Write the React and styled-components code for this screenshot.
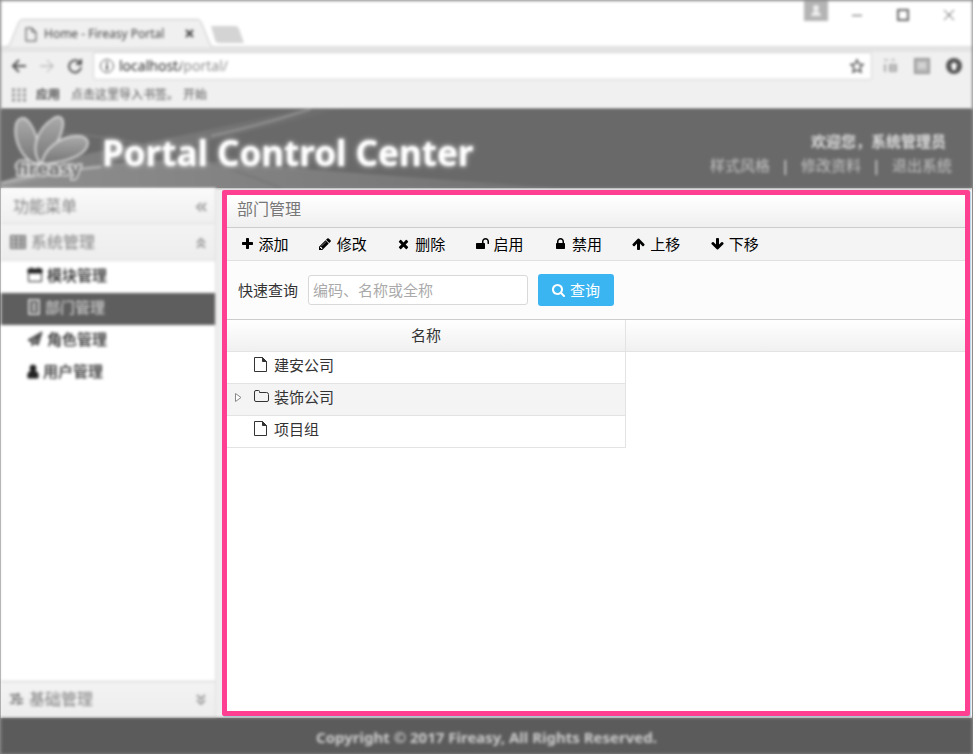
import React from "react";
import styled, { createGlobalStyle, css } from "styled-components";

const cjk = `"Noto Sans", "Noto Sans CJK SC", sans-serif`;

const GlobalStyle = createGlobalStyle`
  *, *::before, *::after { box-sizing: border-box; }
  body { margin: 0; background: #8c8c8c; color: #333; font: 15px/20px ${cjk}; }
  button, input { font: inherit; color: inherit; }
  a { color: inherit; text-decoration: none; }
  svg { display: block; flex: none; }
`;

/* ---------- window ---------- */

const soft = css`
  filter: blur(1.7px);
`;

const Shell = styled.div`
  min-height: 100vh;
  padding: 1px 1px 0;
  display: flex;
  flex-direction: column;
  background: #8c8c8c;
  overflow: hidden;
`;

const PlainButton = styled.button`
  border: 0;
  padding: 0;
  background: none;
  cursor: pointer;
`;

/* ---------- browser frame ---------- */

const Browser = styled.div`
  ${soft}
  background: #f0f0f0;
  color: #555;
  font-size: 12px;
  line-height: 16px;
`;

const TitleBar = styled.div`
  height: 46px;
  display: flex;
  align-items: flex-end;
  justify-content: space-between;
  padding-left: 4px;
  background: #fff;
  box-shadow: inset 0 -1px #ddd;
`;

const TabStrip = styled.div`
  display: flex;
  align-items: flex-end;
`;

const Tab = styled.div`
  position: relative;
  z-index: 0;
  width: 208px;
  height: 28px;
  display: flex;
  align-items: center;
  padding: 2px 18px 0 20px;
  gap: 7px;
  color: #444;

  > span { flex: 1; white-space: nowrap; }
`;

const TabShape = styled.svg`
  position: absolute;
  inset: 0;
  z-index: -1;
`;

const NewTab = styled(PlainButton)`
  margin: 0 0 4px -3px;
`;

const WindowButtons = styled.div`
  align-self: flex-start;
  display: flex;
  align-items: flex-start;
  gap: 22px;
  padding-right: 11px;
`;

const Account = styled(PlainButton)`
  width: 24px;
  height: 20px;
  margin-right: -5px;
  display: grid;
  place-items: center;
  background: #b4b4b4;
`;

const WindowButton = styled(PlainButton)`
  width: 24px;
  height: 28px;
  display: grid;
  place-items: center;
`;

const AddressRow = styled.div`
  display: flex;
  align-items: center;
  gap: 10px;
  padding: 5px 10px 0;
  background: linear-gradient(#e4e4e4 5px, #f0f0f0 5px);
`;

const NavButtons = styled.div`
  display: flex;
  gap: 12px;
`;

const AddressBox = styled.label`
  flex: 1;
  height: 28px;
  display: flex;
  align-items: center;
  gap: 4px;
  padding: 0 6px 0 5px;
  background: #fff;
  border: 1px solid #d2d2d2;
  border-radius: 2px;
`;

const Address = styled.input`
  flex: 1;
  min-width: 0;
  border: 0;
  padding: 0;
  outline: 0;
  font-size: 14px;
  color: transparent;
  background: linear-gradient(to right, #222 62px, #888 62px);
  background-clip: text;
  -webkit-background-clip: text;
`;

const Extensions = styled.div`
  display: flex;
  gap: 16px;
`;

const Bookmarks = styled.div`
  height: 29px;
  display: flex;
  align-items: center;
  gap: 11px;
  padding: 1px 0 0 11px;

  a:first-of-type { color: #222; margin-left: -1px; font-weight: 500; }
  a:last-of-type { margin-left: -7px; }
`;

/* ---------- portal header ---------- */

const Header = styled.header`
  ${soft}
  position: relative;
  height: 79px;
  display: flex;
  align-items: center;
  background: #696969;
  overflow: hidden;
`;

const Swoosh = styled.svg`
  position: absolute;
  inset: 0;
`;

const Brand = styled.div`
  position: relative;
  flex: 1;
  display: flex;
  align-items: center;
  gap: 12px;
  padding-left: 11px;
`;

const BrandTitle = styled.h1`
  margin: 8px 0 0;
  font: bold 35px/44px "Noto Sans", sans-serif;
  color: #fff;
  text-shadow: 0 0 5px #ddd;
  white-space: nowrap;
`;

const UserArea = styled.div`
  position: relative;
  padding: 9px 20px 0 0;
  color: #ccc;
  line-height: 24px;
`;

const Welcome = styled.div`
  padding-right: 6px;
  text-align: right;
  font-weight: bold;
  color: #ddd;
`;

const UserLinks = styled.nav`
  display: flex;
  color: #c4c4c4;

  a + a::before { content: "|"; display: inline-block; width: 31px; text-align: center; color: #eee; }
`;

/* ---------- body ---------- */

const Main = styled.main`
  flex: 1;
  display: flex;
  align-items: stretch;
  background: #efefef;
`;

const Sidebar = styled.aside`
  ${soft}
  width: 215px;
  display: flex;
  flex-direction: column;
  background: #fff;
  border-right: 1px solid #ddd;
`;

const SideBar = styled.div`
  height: ${(p) => (p.$title ? 36 : 37)}px;
  display: flex;
  align-items: center;
  gap: 5px;
  padding: 0 8px ${(p) => (p.$top ? 2 : 0)}px ${(p) => (p.$title ? 12 : 9)}px;
  font-size: 16px;
  color: #808080;
  background: linear-gradient(${(p) => (p.$title ? "#fafafa, #efefef" : "#f3f3f3, #ededed")});
  border-bottom: 1px solid #ddd;
  border-top: ${(p) => (p.$top ? "1px solid #ccc" : "0")};

  > span { flex: 1; }
`;

const Menu = styled.nav`
  flex: 1;
`;

const MenuItem = styled.a`
  height: 32px;
  display: flex;
  align-items: center;
  gap: 4px;
  padding: 0 0 4px 26px;
  font-weight: 500;
  color: ${(p) => (p.$active ? "#ccc" : "#222")};
  background: ${(p) => (p.$active ? "#5e5e5e" : "transparent")};
`;

const Panel = styled.section`
  flex: 1;
  min-width: 0;
  margin: 2px 2px 2px 6px;
  border: 5px solid #ff4092;
  border-radius: 2px;
  box-shadow: 1px 1px #b9d9e8;
  background: #fff;
`;

const PanelTitle = styled.h2`
  margin: 0;
  height: 33px;
  padding: 4px 10px;
  font-size: 16px;
  font-weight: normal;
  color: #777;
  background: linear-gradient(#fff, #efefef);
  border-bottom: 1px solid #ccc;
`;

const Toolbar = styled.div`
  height: 33px;
  display: flex;
  align-items: center;
  gap: 5px;
  background: #f4f4f4;
  border-bottom: 1px solid #e1e1e1;
`;

const Tool = styled(PlainButton)`
  padding: 0 12px;
  color: #000;
  font-family: "Noto Sans CJK SC", sans-serif;
  white-space: nowrap;
`;

const IconSlot = styled.span`
  display: inline-flex;
  width: 16px;
  justify-content: center;
  vertical-align: -1px;
`;

const SearchForm = styled.form`
  height: 59px;
  display: flex;
  align-items: center;
  gap: 10px;
  padding: 0 11px;
  background: #fcfcfc;
  border-bottom: 1px solid #ccc;
`;

const SearchInput = styled.input`
  width: 220px;
  height: 30px;
  padding: 0 4px;
  border: 1px solid #d9d9d9;
  border-radius: 3px;
  background: #fff;
  &::placeholder { color: #aaa; opacity: 1; }
`;

const SearchButton = styled.button`
  height: 32px;
  display: flex;
  align-items: center;
  gap: 5px;
  padding: 0 14px;
  border: 0;
  border-radius: 3px;
  color: #fff;
  background: #3bb4f2;
  cursor: pointer;
`;

const Tree = styled.table`
  width: 100%;
  table-layout: fixed;
  border-collapse: separate;
  border-spacing: 0;
`;

const NameCol = styled.col`
  width: 399px;
`;

const Th = styled.th`
  height: 32px;
  padding: 0 0 2px;
  font-weight: normal;
  background: linear-gradient(#fff, #f0f0f0);
  border-bottom: 1px solid #e3e3e3;

  &:first-child { border-right: 1px solid #e3e3e3; }
`;

const Td = styled.td`
  height: 32px;
  padding: 0;
  background: ${(p) => (p.$alt ? "#f4f4f4" : "transparent")};
  border: solid #e3e3e3;
  border-width: 0 1px 1px 0;
`;

const Node = styled.div`
  display: grid;
  grid-template-columns: 19px 16px 1fr;
  align-items: center;
  column-gap: 4px;
  padding: 0 0 6px 4px;

  > :nth-child(2) { justify-self: start; }
`;

const Expander = styled(PlainButton)`
  height: 20px;
  display: grid;
  align-items: center;
  padding: 2px 0 0 4px;
`;

const Footer = styled.footer`
  ${soft}
  height: 36px;
  padding-top: 1px;
  display: grid;
  place-items: center;
  font: bold 15px/20px "Noto Sans", sans-serif;
  color: #ccc;
  background: #5b5b5b;
`;

/* ---------- icons ---------- */

const glyphs = {
  plus: [192, 1408, "M1600 736v192q0 40-28 68t-68 28h-416v416q0 40-28 68t-68 28h-192q-40 0-68-28t-28-68v-416h-416q-40 0-68-28t-28-68v-192q0-40 28-68t68-28h416v-416q0-40 28-68t68-28h192q40 0 68 28t28 68v416h416q40 0 68 28t28 68z"],
  pencil: [128, 1536, "M491 1536l91-91-235-235-91 91v107h128v128h107zm523-928q0-22-22-22-10 0-17 7l-542 542q-7 7-7 17 0 22 22 22 10 0 17-7l542-542q7-7 7-17zm-54-192l416 416-832 832h-416v-416zm683 96q0 53-37 90l-166 166-416-416 166-165q36-38 90-38 53 0 91 38l235 234q37 39 37 91z"],
  times: [192, 1408, "M1490 1322q0 40-28 68l-136 136q-28 28-68 28t-68-28l-294-294-294 294q-28 28-68 28t-68-28l-136-136q-28-28-28-68t28-68l294-294-294-294q-28-28-28-68t28-68l136-136q28-28 68-28t68 28l294 294 294-294q28-28 68-28t68 28l136 136q28 28 28 68t-28 68l-294 294 294 294q28 28 28 68z"],
  unlock: [64, 1664, "M1728 576v256q0 26-19 45t-45 19h-64q-26 0-45-19t-19-45v-256q0-106-75-181t-181-75-181 75-75 181v192h96q40 0 68 28t28 68v576q0 40-28 68t-68 28h-960q-40 0-68-28t-28-68v-576q0-40 28-68t68-28h672v-192q0-185 131.5-316.5t316.5-131.5 316.5 131.5 131.5 316.5z"],
  lock: [320, 1152, "M640 768h512v-192q0-106-75-181t-181-75-181 75-75 181v192zm832 96v576q0 40-28 68t-68 28h-960q-40 0-68-28t-28-68v-576q0-40 28-68t68-28h32v-192q0-184 132-316t316-132 316 132 132 316v192h32q40 0 68 28t28 68z"],
  up: [64, 1664, "M1675 971q0 51-37 90l-75 75q-38 38-91 38-54 0-90-38l-294-293v704q0 52-37.5 84.5t-90.5 32.5h-128q-53 0-90.5-32.5t-37.5-84.5v-704l-294 293q-36 38-90 38t-90-38l-75-75q-38-38-38-90 0-53 38-91l651-651q35-37 90-37 54 0 91 37l651 651q37 39 37 91z"],
  down: [64, 1664, "M1675 832q0 53-37 90l-651 652q-39 37-91 37-53 0-90-37l-651-652q-38-36-38-90 0-53 38-91l74-75q39-37 91-37 53 0 90 37l294 294v-704q0-52 38-90t90-38h128q52 0 90 38t38 90v704l294-294q37-37 90-37 52 0 91 37l75 75q37 39 37 91z"],
  search: [64, 1664, "M1216 832q0-185-131.5-316.5t-316.5-131.5-316.5 131.5-131.5 316.5 131.5 316.5 316.5 131.5 316.5-131.5 131.5-316.5zm512 832q0 52-38 90t-90 38q-54 0-90-38l-343-342q-179 124-399 124-143 0-273.5-55.5t-225-150-150-225-55.5-273.5 55.5-273.5 150-225 225-150 273.5-55.5 273.5 55.5 225 150 150 225 55.5 273.5q0 220-124 399l343 343q37 37 37 90z"],
};

function Glyph({ name }) {
  const [x, w, d] = glyphs[name];
  return (
    <svg width={w / 128} height="14" viewBox={`${x} 0 ${w} 1792`} fill="currentColor" aria-hidden="true">
      <path d={d} />
    </svg>
  );
}

function Line({ size = 16, h = size, width = 1, children, fill = "none" }) {
  return (
    <svg width={size} height={h} viewBox={`0 0 ${size} ${h}`} fill={fill} stroke="currentColor" strokeWidth={width} aria-hidden="true">
      {children}
    </svg>
  );
}

const FileIcon = () => (
  <Line size={14} h={16}>
    <path d="M.5 .5H8.500L12.500 4.500V14.500H.5ZM8.500 .5V4.500H12.500" />
    <path d="M8.500 .5l4 4H8.500z" fill="currentColor" stroke="none" />
  </Line>
);

const FolderIcon = () => (
  <Line size={15} h={14}>
    <path d="M.5 2Q.5 .5 2 .5H4.500Q5.500 .5 5.500 1.500V2.500H12.500Q14.500 2.500 14.500 4.500V10Q14.500 11.500 13 11.500H2Q.5 11.500 .5 10Z" />
  </Line>
);

const Logo = () => (
  <svg width="78" height="68" viewBox="0 0 78 68" aria-label="fireasy" role="img">
    <defs>
      <linearGradient id="petal" x2="0" y2="1">
        <stop stopColor="#aaa" />
        <stop offset="1" stopColor="#757575" />
      </linearGradient>
    </defs>
    <g fill="url(#petal)" stroke="#d4d4d4" strokeWidth="2">
      <path d="M27 49C10 47 1 24 4 9C7 1 13 2 17 7C25 17 28 34 27 49Z" />
      <path d="M29 49C18 36 24 14 42 3C50 -1 53 5 50 15C47 29 38 36 29 49Z" />
      <path d="M30 49C31 35 48 21 65 21C77 21 79 29 71 37C62 44 45 48 30 49Z" />
    </g>
    <text x="4" y="60" fontFamily="DejaVu Sans" fontWeight="bold" fontSize="17" fill="#777" stroke="#ddd" strokeWidth="3" paintOrder="stroke">
      fireasy
    </text>
  </svg>
);

const TableIcon = () => (
  <Line width={2}>
    <path d="M1 2H15V14H1ZM1 6H15M1 10H15M6 2V14M11 2V14" />
  </Line>
);
const CalendarIcon = () => (
  <Line>
    <path d="M1.500 3.500H14.500V14.500H1.500Z" />
    <path d="M1 2H15V6H1Z" fill="currentColor" />
    <path d="M4.500 0V4M11.500 0V4" />
  </Line>
);
const BuildingIcon = () => (
  <Line size={14} h={16} width={2}>
    <path d="M2 1H12V15H2ZM5 5H9M5 8H9M5 11H9" />
  </Line>
);
const PlaneIcon = () => (
  <Line>
    <path d="M15 1L1 9L5 11L12 4L7 12L11 14ZM5 11V15L7 12" fill="currentColor" fillOpacity=".6" />
  </Line>
);
const UserIcon = () => (
  <Line size={12} h={15}>
    <circle cx="6" cy="4" r="3" fill="currentColor" />
    <path d="M1 14Q0 8 4 7H8Q12 8 11 14Z" fill="currentColor" />
  </Line>
);
const SlidersIcon = () => (
  <Line size={14} width={2}>
    <path d="M0 3H10M2 7H13M0 11H5M9 11H13M8 1V5M4 5V9M8 9V13" />
  </Line>
);
const Chevrons = ({ d }) => (
  <Line size={12} width={2}>
    <path d={d} opacity=".75" />
  </Line>
);

/* ---------- data ---------- */

const tools = [
  ["plus", "添加"],
  ["pencil", "修改"],
  ["times", "删除"],
  ["unlock", "启用"],
  ["lock", "禁用"],
  ["up", "上移"],
  ["down", "下移"],
];

const menu = [
  ["模块管理", CalendarIcon],
  ["部门管理", BuildingIcon],
  ["角色管理", PlaneIcon],
  ["用户管理", UserIcon],
];

const departments = [
  { name: "建安公司" },
  { name: "装饰公司", folder: true },
  { name: "项目组" },
];

/* ---------- page ---------- */

function BrowserFrame() {
  return (
    <Browser>
      <TitleBar>
        <TabStrip>
          <Tab>
            <TabShape width="208" height="28" viewBox="0 0 208 28">
              <path d="M0 28Q4 28 5 25L14 3Q15 .5 18 .5H192Q195 .5 196 3L205 25Q206 28 208 28" fill="#f0f0f0" stroke="#c4c4c4" />
            </TabShape>
            <Line size={12} h={15}>
              <path d="M1 1H7L11 5V14H1ZM7 1V5H11" />
            </Line>
            <span>Home - Fireasy Portal</span>
            <PlainButton aria-label="Close tab">
              <Line size={10} width={2}><path d="M1 1L8 8M8 1L1 8" /></Line>
            </PlainButton>
          </Tab>
          <NewTab aria-label="New tab">
            <svg width="34" height="17" viewBox="0 0 34 17"><path d="M1 0H25Q28 0 29 3L34 17H9Q6 17 5 14Z" fill="#d4d4d4" /></svg>
          </NewTab>
        </TabStrip>
        <WindowButtons>
          <Account aria-label="Account">
            <svg width="12" height="12" viewBox="0 0 12 12" fill="#eee"><circle cx="6" cy="3" r="3" /><path d="M1 11Q2 6 6 6T11 11Z" /></svg>
          </Account>
          <WindowButton aria-label="Minimize"><Line size={12} width={1}><path d="M1 6.500H11" /></Line></WindowButton>
          <WindowButton aria-label="Maximize"><Line size={12} width={2}><path d="M1 1H11V11H1Z" opacity=".9" /></Line></WindowButton>
          <WindowButton aria-label="Close"><Line size={12} width={1}><path d="M1 1L11 11M11 1L1 11" /></Line></WindowButton>
        </WindowButtons>
      </TitleBar>
      <AddressRow>
        <NavButtons>
          <PlainButton aria-label="Back"><Line width={2}><path d="M15 8H2M8 2L2 8L8 14" /></Line></PlainButton>
          <PlainButton aria-label="Forward"><Line width={1}><path d="M1 8H14M8 2L14 8L8 14" opacity=".5" /></Line></PlainButton>
          <PlainButton aria-label="Reload"><Line width={2}><path d="M13 5A6 6 0 1 0 14 9M14 1V6H9" /></Line></PlainButton>
        </NavButtons>
        <AddressBox>
          <Line><circle cx="8" cy="8" r="6.500" /><path d="M8 7V12M8 4V6" strokeWidth="2" /></Line>
          <Address aria-label="Address" defaultValue="localhost/portal/" />
          <PlainButton aria-label="Bookmark">
            <Line width={1}><path d="M8 2L10 6L14 6.500L11 9.500L12 14L8 12L4 14L5 9.500L2 6.500L6 6Z" strokeWidth="1.5" /></Line>
          </PlainButton>
        </AddressBox>
        <Extensions>
          <PlainButton aria-label="Translate"><Line width={2}><path d="M2 2H6M9 2H13" opacity=".3" /><path d="M3 6V14M8 7H14V13H8ZM8 10H14" opacity=".45" /></Line></PlainButton>
          <PlainButton aria-label="Notes"><Line width={2}><path d="M1 1H15V15H1Z" fill="#bbb" stroke="#999" /><path d="M4 6H12M4 9H12" stroke="#ddd" /></Line></PlainButton>
          <PlainButton aria-label="Update"><Line width={1}><circle cx="8" cy="8" r="8" fill="#555" stroke="none" /><path d="M8 4L12 8H10V12H6V8H4Z" fill="#fff" stroke="none" /></Line></PlainButton>
        </Extensions>
      </AddressRow>
      <Bookmarks>
        <Line size={14} width={3}><path d="M0 2H14M0 7H14M0 12H14" strokeDasharray="3 2.500" opacity=".6" /></Line>
        <a href="#apps">应用</a>
        <span>点击这里导入书签。</span>
        <a href="#start">开始</a>
      </Bookmarks>
    </Browser>
  );
}

export default function App() {
  return (
    <Shell>
      <GlobalStyle />
      <BrowserFrame />
      <Header>
        <Swoosh width="100%" height="79" viewBox="0 0 971 79" preserveAspectRatio="xMinYMin slice" aria-hidden="true">
          <defs>
            <linearGradient id="wave" x2="1" y2="0">
              <stop stopColor="#a8a8a8" />
              <stop offset="1" stopColor="#757575" />
            </linearGradient>
            <linearGradient id="ray" x2="1" y2="0">
              <stop stopColor="#999" />
              <stop offset="1" stopColor="#6c6c6c" />
            </linearGradient>
          </defs>
          <path d="M0 73Q60 50 100 42Q190 26 300 0H340Q250 22 190 36Q90 58 0 79Z" fill="url(#ray)" opacity=".6" />
          <path d="M0 79V75Q110 44 230 54T560 79Z" fill="url(#wave)" opacity=".6" />
          <path d="M60 24Q160 30 280 79" stroke="#777" strokeWidth="2" fill="none" />
          <path d="M0 74Q50 62 100 58" stroke="#bbb" strokeWidth="2" fill="none" />
          <path d="M210 27Q260 16 310 0" stroke="#959595" strokeWidth="2" fill="none" />
        </Swoosh>
        <Brand>
          <Logo />
          <BrandTitle>Portal Control Center</BrandTitle>
        </Brand>
        <UserArea>
          <Welcome>欢迎您，系统管理员</Welcome>
          <UserLinks>
            <a href="#style">样式风格</a>
            <a href="#profile">修改资料</a>
            <a href="#logout">退出系统</a>
          </UserLinks>
        </UserArea>
      </Header>
      <Main>
        <Sidebar>
          <SideBar $title>
            <span>功能菜单</span>
            <Chevrons d="M6 3L2 7L6 11M11 3L7 7L11 11" />
          </SideBar>
          <SideBar>
            <TableIcon />
            <span>系统管理</span>
            <Chevrons d="M2 7L6 3L10 7M2 12L6 8L10 12" />
          </SideBar>
          <Menu>
            {menu.map(([label, Icon]) => (
              <MenuItem key={label} href="#menu" $active={label === "部门管理"}>
                <Icon />
                {label}
              </MenuItem>
            ))}
          </Menu>
          <SideBar $top>
            <SlidersIcon />
            <span>基础管理</span>
            <Chevrons d="M2 2L6 6L10 2M2 7L6 11L10 7" />
          </SideBar>
        </Sidebar>
        <Panel>
          <PanelTitle>部门管理</PanelTitle>
          <Toolbar>
            {tools.map(([icon, label]) => (
              <Tool key={icon} type="button">
                <IconSlot><Glyph name={icon} /></IconSlot> {label}
              </Tool>
            ))}
          </Toolbar>
          <SearchForm onSubmit={(e) => e.preventDefault()}>
            <label htmlFor="keyword">快速查询</label>
            <SearchInput id="keyword" placeholder="编码、名称或全称" />
            <SearchButton type="submit">
              <Glyph name="search" />
              查询
            </SearchButton>
          </SearchForm>
          <Tree>
            <colgroup>
              <NameCol />
              <col />
            </colgroup>
            <thead>
              <tr>
                <Th scope="col">名称</Th>
                <Th as="td" />
              </tr>
            </thead>
            <tbody>
              {departments.map(({ name, folder }) => (
                <tr key={name}>
                  <Td $alt={folder}>
                    <Node>
                      {folder ? (
                        <Expander aria-label="展开">
                          <svg width="7" height="9" viewBox="0 0 7 9" fill="#fff" stroke="#888"><path d="M.5 .5L6 4.500L.5 8.500Z" /></svg>
                        </Expander>
                      ) : (
                        <span />
                      )}
                      {folder ? <FolderIcon /> : <FileIcon />}
                      <span>{name}</span>
                    </Node>
                  </Td>
                </tr>
              ))}
            </tbody>
          </Tree>
        </Panel>
      </Main>
      <Footer>Copyright © 2017 Fireasy, All Rights Reserved.</Footer>
    </Shell>
  );
}
